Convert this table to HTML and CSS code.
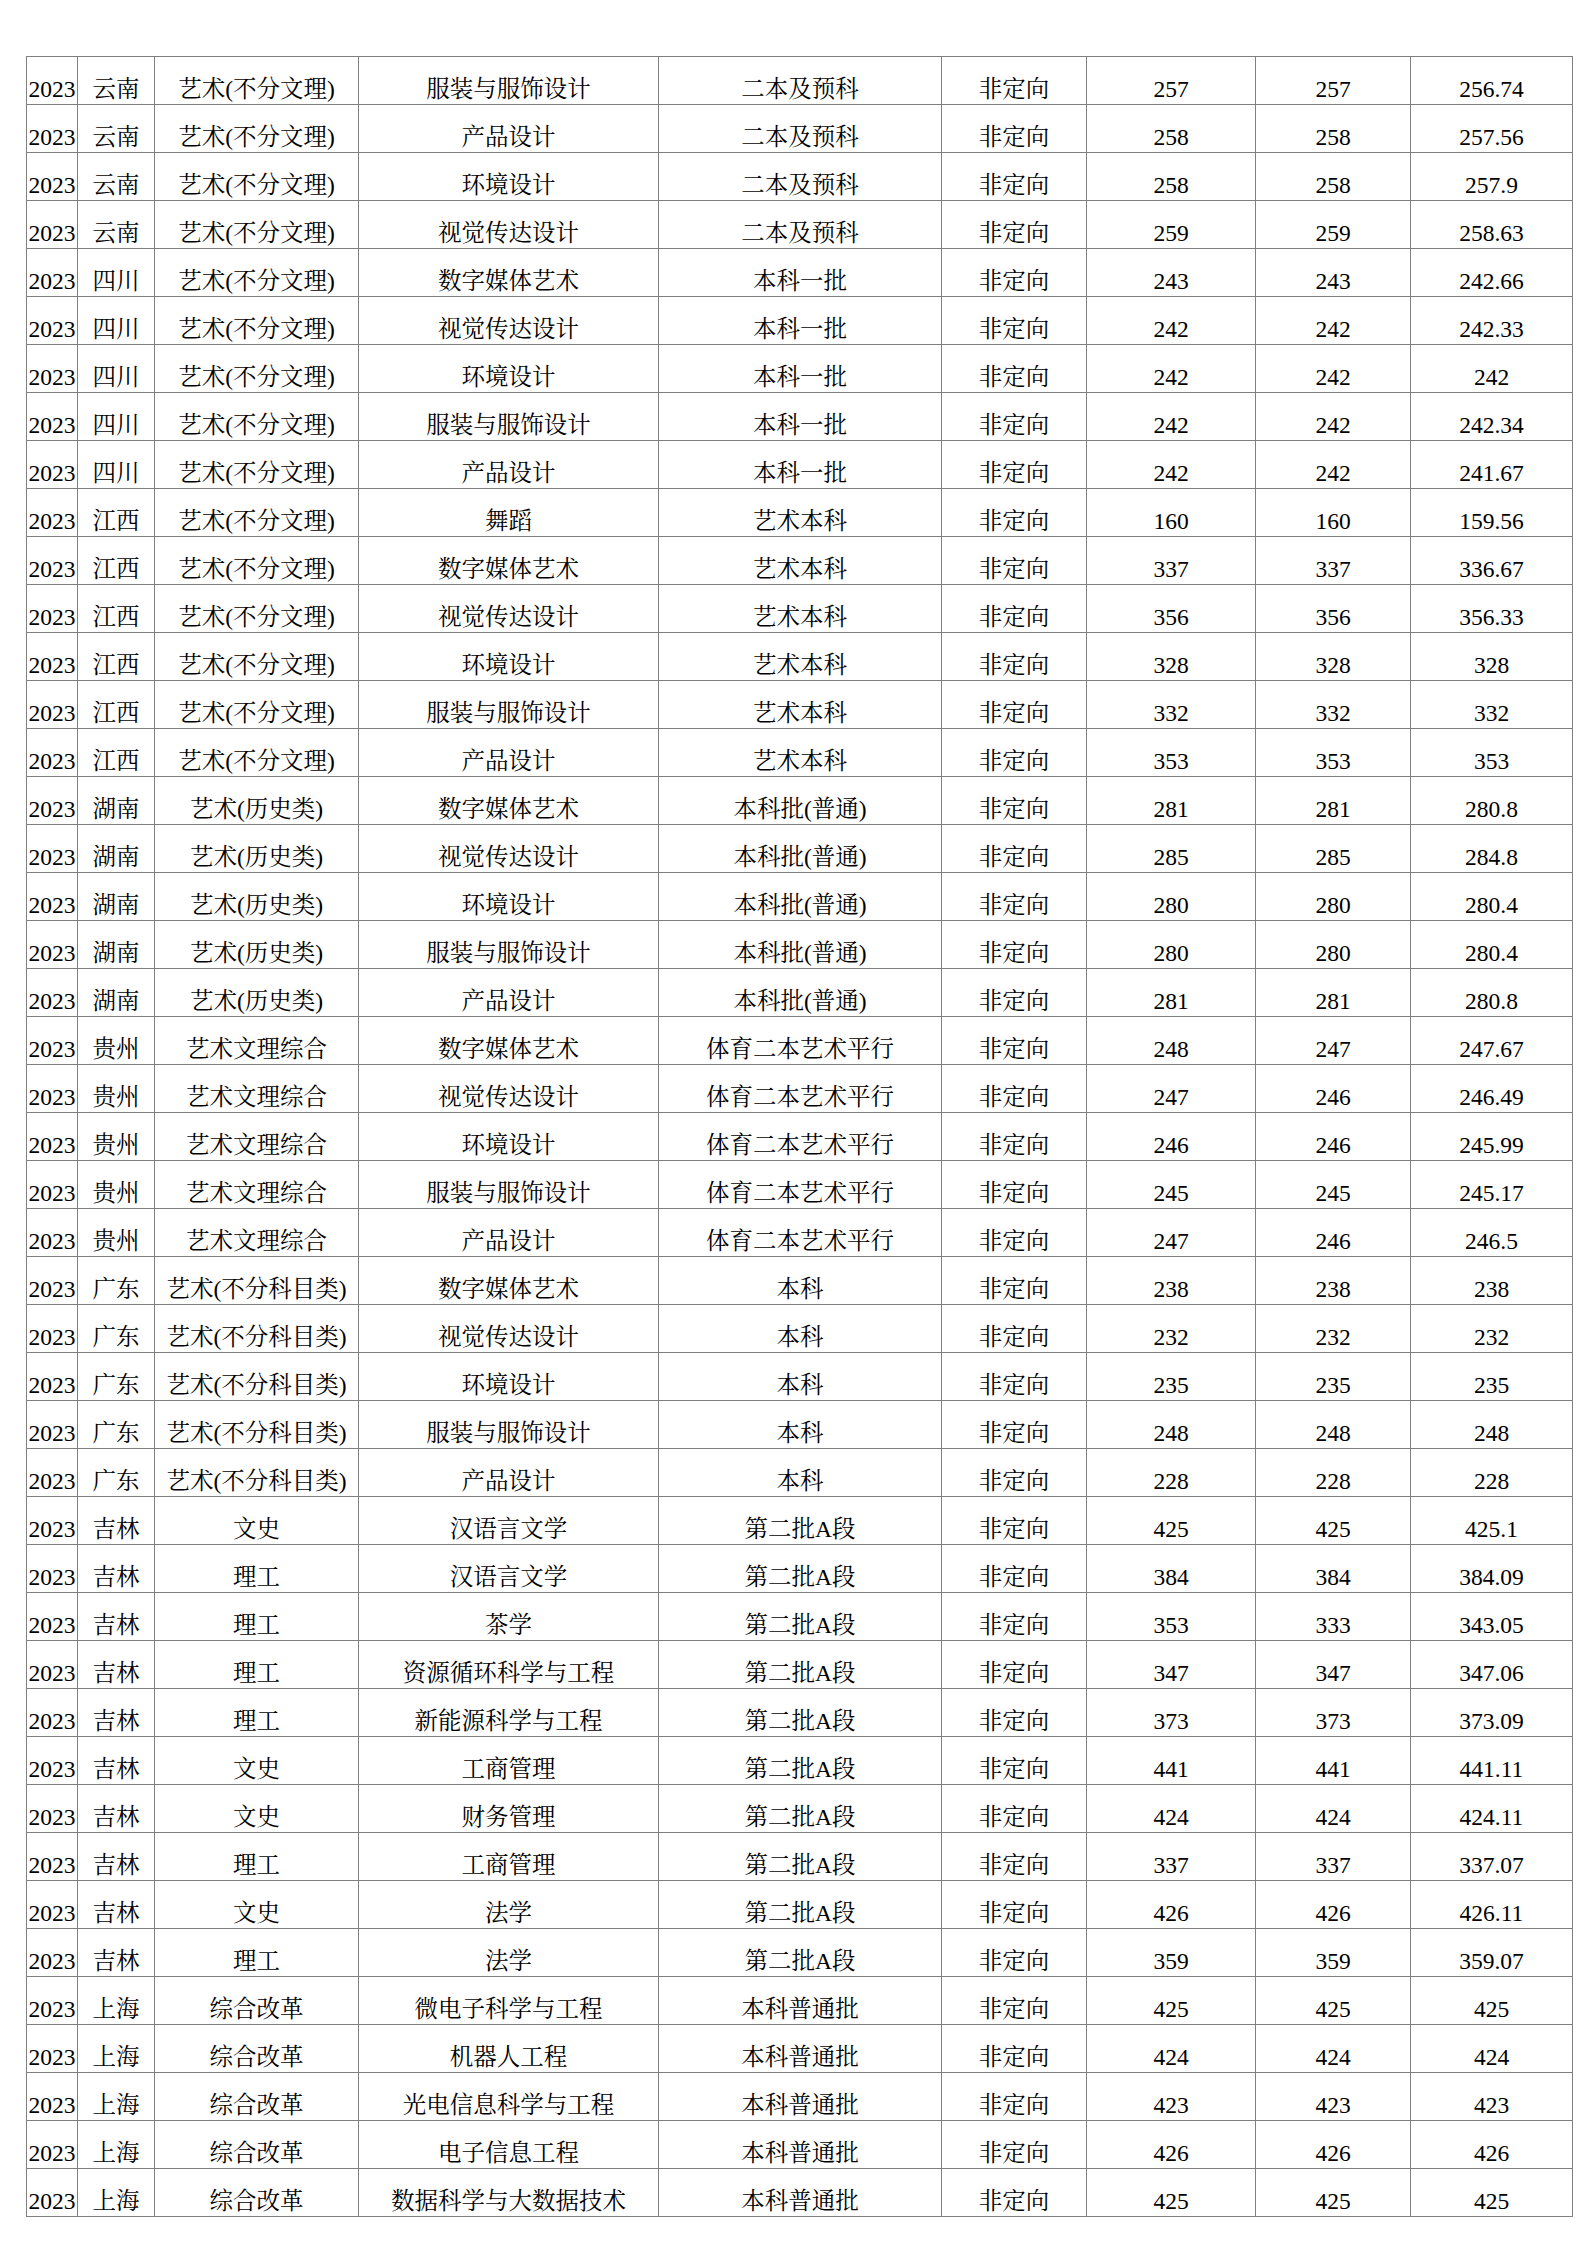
FILE: index.html
```html
<!DOCTYPE html>
<html lang="zh-CN">
<head>
<meta charset="utf-8">
<title>录取分数</title>
<link rel="stylesheet" href="styles.css">
</head>
<body>
<table class="scores">
<colgroup>
<col class="c-year"><col class="c-prov"><col class="c-type"><col class="c-major"><col class="c-batch"><col class="c-dir"><col class="c-max"><col class="c-min"><col class="c-avg">
</colgroup>
<tbody>
<tr><td>2023</td><td>云南</td><td>艺术(不分文理)</td><td>服装与服饰设计</td><td>二本及预科</td><td>非定向</td><td>257</td><td>257</td><td>256.74</td></tr>
<tr><td>2023</td><td>云南</td><td>艺术(不分文理)</td><td>产品设计</td><td>二本及预科</td><td>非定向</td><td>258</td><td>258</td><td>257.56</td></tr>
<tr><td>2023</td><td>云南</td><td>艺术(不分文理)</td><td>环境设计</td><td>二本及预科</td><td>非定向</td><td>258</td><td>258</td><td>257.9</td></tr>
<tr><td>2023</td><td>云南</td><td>艺术(不分文理)</td><td>视觉传达设计</td><td>二本及预科</td><td>非定向</td><td>259</td><td>259</td><td>258.63</td></tr>
<tr><td>2023</td><td>四川</td><td>艺术(不分文理)</td><td>数字媒体艺术</td><td>本科一批</td><td>非定向</td><td>243</td><td>243</td><td>242.66</td></tr>
<tr><td>2023</td><td>四川</td><td>艺术(不分文理)</td><td>视觉传达设计</td><td>本科一批</td><td>非定向</td><td>242</td><td>242</td><td>242.33</td></tr>
<tr><td>2023</td><td>四川</td><td>艺术(不分文理)</td><td>环境设计</td><td>本科一批</td><td>非定向</td><td>242</td><td>242</td><td>242</td></tr>
<tr><td>2023</td><td>四川</td><td>艺术(不分文理)</td><td>服装与服饰设计</td><td>本科一批</td><td>非定向</td><td>242</td><td>242</td><td>242.34</td></tr>
<tr><td>2023</td><td>四川</td><td>艺术(不分文理)</td><td>产品设计</td><td>本科一批</td><td>非定向</td><td>242</td><td>242</td><td>241.67</td></tr>
<tr><td>2023</td><td>江西</td><td>艺术(不分文理)</td><td>舞蹈</td><td>艺术本科</td><td>非定向</td><td>160</td><td>160</td><td>159.56</td></tr>
<tr><td>2023</td><td>江西</td><td>艺术(不分文理)</td><td>数字媒体艺术</td><td>艺术本科</td><td>非定向</td><td>337</td><td>337</td><td>336.67</td></tr>
<tr><td>2023</td><td>江西</td><td>艺术(不分文理)</td><td>视觉传达设计</td><td>艺术本科</td><td>非定向</td><td>356</td><td>356</td><td>356.33</td></tr>
<tr><td>2023</td><td>江西</td><td>艺术(不分文理)</td><td>环境设计</td><td>艺术本科</td><td>非定向</td><td>328</td><td>328</td><td>328</td></tr>
<tr><td>2023</td><td>江西</td><td>艺术(不分文理)</td><td>服装与服饰设计</td><td>艺术本科</td><td>非定向</td><td>332</td><td>332</td><td>332</td></tr>
<tr><td>2023</td><td>江西</td><td>艺术(不分文理)</td><td>产品设计</td><td>艺术本科</td><td>非定向</td><td>353</td><td>353</td><td>353</td></tr>
<tr><td>2023</td><td>湖南</td><td>艺术(历史类)</td><td>数字媒体艺术</td><td>本科批(普通)</td><td>非定向</td><td>281</td><td>281</td><td>280.8</td></tr>
<tr><td>2023</td><td>湖南</td><td>艺术(历史类)</td><td>视觉传达设计</td><td>本科批(普通)</td><td>非定向</td><td>285</td><td>285</td><td>284.8</td></tr>
<tr><td>2023</td><td>湖南</td><td>艺术(历史类)</td><td>环境设计</td><td>本科批(普通)</td><td>非定向</td><td>280</td><td>280</td><td>280.4</td></tr>
<tr><td>2023</td><td>湖南</td><td>艺术(历史类)</td><td>服装与服饰设计</td><td>本科批(普通)</td><td>非定向</td><td>280</td><td>280</td><td>280.4</td></tr>
<tr><td>2023</td><td>湖南</td><td>艺术(历史类)</td><td>产品设计</td><td>本科批(普通)</td><td>非定向</td><td>281</td><td>281</td><td>280.8</td></tr>
<tr><td>2023</td><td>贵州</td><td>艺术文理综合</td><td>数字媒体艺术</td><td>体育二本艺术平行</td><td>非定向</td><td>248</td><td>247</td><td>247.67</td></tr>
<tr><td>2023</td><td>贵州</td><td>艺术文理综合</td><td>视觉传达设计</td><td>体育二本艺术平行</td><td>非定向</td><td>247</td><td>246</td><td>246.49</td></tr>
<tr><td>2023</td><td>贵州</td><td>艺术文理综合</td><td>环境设计</td><td>体育二本艺术平行</td><td>非定向</td><td>246</td><td>246</td><td>245.99</td></tr>
<tr><td>2023</td><td>贵州</td><td>艺术文理综合</td><td>服装与服饰设计</td><td>体育二本艺术平行</td><td>非定向</td><td>245</td><td>245</td><td>245.17</td></tr>
<tr><td>2023</td><td>贵州</td><td>艺术文理综合</td><td>产品设计</td><td>体育二本艺术平行</td><td>非定向</td><td>247</td><td>246</td><td>246.5</td></tr>
<tr><td>2023</td><td>广东</td><td>艺术(不分科目类)</td><td>数字媒体艺术</td><td>本科</td><td>非定向</td><td>238</td><td>238</td><td>238</td></tr>
<tr><td>2023</td><td>广东</td><td>艺术(不分科目类)</td><td>视觉传达设计</td><td>本科</td><td>非定向</td><td>232</td><td>232</td><td>232</td></tr>
<tr><td>2023</td><td>广东</td><td>艺术(不分科目类)</td><td>环境设计</td><td>本科</td><td>非定向</td><td>235</td><td>235</td><td>235</td></tr>
<tr><td>2023</td><td>广东</td><td>艺术(不分科目类)</td><td>服装与服饰设计</td><td>本科</td><td>非定向</td><td>248</td><td>248</td><td>248</td></tr>
<tr><td>2023</td><td>广东</td><td>艺术(不分科目类)</td><td>产品设计</td><td>本科</td><td>非定向</td><td>228</td><td>228</td><td>228</td></tr>
<tr><td>2023</td><td>吉林</td><td>文史</td><td>汉语言文学</td><td>第二批A段</td><td>非定向</td><td>425</td><td>425</td><td>425.1</td></tr>
<tr><td>2023</td><td>吉林</td><td>理工</td><td>汉语言文学</td><td>第二批A段</td><td>非定向</td><td>384</td><td>384</td><td>384.09</td></tr>
<tr><td>2023</td><td>吉林</td><td>理工</td><td>茶学</td><td>第二批A段</td><td>非定向</td><td>353</td><td>333</td><td>343.05</td></tr>
<tr><td>2023</td><td>吉林</td><td>理工</td><td>资源循环科学与工程</td><td>第二批A段</td><td>非定向</td><td>347</td><td>347</td><td>347.06</td></tr>
<tr><td>2023</td><td>吉林</td><td>理工</td><td>新能源科学与工程</td><td>第二批A段</td><td>非定向</td><td>373</td><td>373</td><td>373.09</td></tr>
<tr><td>2023</td><td>吉林</td><td>文史</td><td>工商管理</td><td>第二批A段</td><td>非定向</td><td>441</td><td>441</td><td>441.11</td></tr>
<tr><td>2023</td><td>吉林</td><td>文史</td><td>财务管理</td><td>第二批A段</td><td>非定向</td><td>424</td><td>424</td><td>424.11</td></tr>
<tr><td>2023</td><td>吉林</td><td>理工</td><td>工商管理</td><td>第二批A段</td><td>非定向</td><td>337</td><td>337</td><td>337.07</td></tr>
<tr><td>2023</td><td>吉林</td><td>文史</td><td>法学</td><td>第二批A段</td><td>非定向</td><td>426</td><td>426</td><td>426.11</td></tr>
<tr><td>2023</td><td>吉林</td><td>理工</td><td>法学</td><td>第二批A段</td><td>非定向</td><td>359</td><td>359</td><td>359.07</td></tr>
<tr><td>2023</td><td>上海</td><td>综合改革</td><td>微电子科学与工程</td><td>本科普通批</td><td>非定向</td><td>425</td><td>425</td><td>425</td></tr>
<tr><td>2023</td><td>上海</td><td>综合改革</td><td>机器人工程</td><td>本科普通批</td><td>非定向</td><td>424</td><td>424</td><td>424</td></tr>
<tr><td>2023</td><td>上海</td><td>综合改革</td><td>光电信息科学与工程</td><td>本科普通批</td><td>非定向</td><td>423</td><td>423</td><td>423</td></tr>
<tr><td>2023</td><td>上海</td><td>综合改革</td><td>电子信息工程</td><td>本科普通批</td><td>非定向</td><td>426</td><td>426</td><td>426</td></tr>
<tr><td>2023</td><td>上海</td><td>综合改革</td><td>数据科学与大数据技术</td><td>本科普通批</td><td>非定向</td><td>425</td><td>425</td><td>425</td></tr>
</tbody>
</table>
</body>
</html>
```

FILE: styles.css
```css
html, body {
  margin: 0;
  padding: 0;
  background: #ffffff;
}

body {
  padding: 56px 0 0 26px;
  font-family: "Liberation Serif", "Noto Serif CJK SC", "Noto Sans CJK SC", serif;
  color: #000000;
}

.scores {
  border-collapse: collapse;
  table-layout: fixed;
  width: 1546px;
  font-size: 23.5px;
}

.scores td {
  border: 1px solid #808080;
  height: 45px;
  padding: 0 0 2px 0;
  text-align: center;
  vertical-align: bottom;
  line-height: 26px;
  white-space: nowrap;
  overflow: visible;
}

.c-year  { width: 51px; }
.c-prov  { width: 77px; }
.c-type  { width: 204px; }
.c-major { width: 300px; }
.c-batch { width: 283px; }
.c-dir   { width: 145px; }
.c-max   { width: 169px; }
.c-min   { width: 155px; }
.c-avg   { width: 162px; }
```
